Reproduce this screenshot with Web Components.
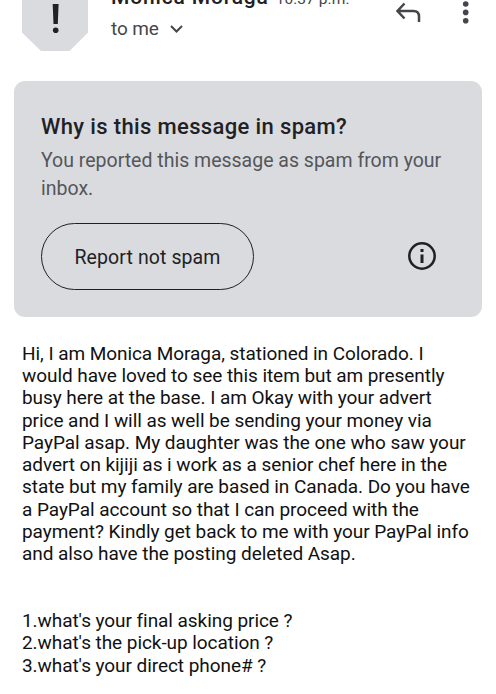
<!DOCTYPE html>
<html lang="en">
<head>
<meta charset="utf-8">
<title>Message</title>
<style>
  html, body {
    margin: 0;
    height: 694px;
    overflow: hidden;
    background: #fff;
    font-family: Roboto, sans-serif;
  }
</style>
</head>
<body>

<mail-header>
  <span slot="sender">Monica Moraga</span>
  <span slot="time">10:37 p.m.</span>
  <span slot="recipient">to me</span>
</mail-header>

<spam-notice>
  <span slot="title">Why is this message in spam?</span>
  <span slot="reason">You reported this message as spam from your<br>inbox.</span>
  <span slot="action">Report not spam</span>
</spam-notice>

<mail-body>
  <mail-line>Hi, I am Monica Moraga, stationed in Colorado. I</mail-line>
  <mail-line>would have loved to see this item but am presently</mail-line>
  <mail-line>busy here at the base. I am Okay with your advert</mail-line>
  <mail-line>price and I will as well be sending your money via</mail-line>
  <mail-line>PayPal asap. My daughter was the one who saw your</mail-line>
  <mail-line>advert on kijiji as i work as a senior chef here in the</mail-line>
  <mail-line>state but my family are based in Canada. Do you have</mail-line>
  <mail-line>a PayPal account so that I can proceed with the</mail-line>
  <mail-line>payment? Kindly get back to me with your PayPal info</mail-line>
  <mail-line>and also have the posting deleted Asap.</mail-line>
  <mail-line slot="questions">1.what's your final asking price ?</mail-line>
  <mail-line slot="questions">2.what's the pick-up location ?</mail-line>
  <mail-line slot="questions">3.what's your direct phone# ?</mail-line>
</mail-body>

<template id="mail-header-template">
  <style>
    :host {
      display: flex;
      height: 81px;
      overflow: hidden;
      color: #444649;
    }
    svg {
      display: block;
      flex: none;
    }
    .avatar {
      margin-left: 22px;
    }
    .who {
      flex: 1;
      margin: -15px 0 0 23px;
      white-space: nowrap;
    }
    .from {
      display: flex;
      align-items: baseline;
      gap: 7px;
      height: 24px;
      line-height: 24px;
    }
    .sender {
      color: #1f2124;
      font-size: 21px;
      font-weight: 500;
      letter-spacing: .85px;
    }
    .time {
      font-size: 15.500px;
      letter-spacing: .1px;
    }
    .to {
      display: flex;
      align-items: center;
      gap: 11px;
      margin-top: 8px;
      font-size: 19px;
      line-height: 24px;
      letter-spacing: -.1px;
    }
  </style>
  <svg class="avatar" width="66" height="52" viewBox="22 0 66 52">
    <path d="M22 0H88V32.500L69.500 51H41L22 32.500Z" fill="#dadbdf"/>
    <path d="M52.700 4H58.600L57.800 24H53.500Z" fill="#1f2124"/>
    <circle cx="55.700" cy="30.300" r="2.800" fill="#1f2124"/>
  </svg>
  <div class="who">
    <div class="from">
      <span class="sender"><slot name="sender"></slot></span>
      <span class="time"><slot name="time"></slot></span>
    </div>
    <div class="to">
      <slot name="recipient"></slot>
      <svg width="13" height="8" viewBox="0 0 13 8"><path d="M1 1L6.500 6.500L12 1" fill="none" stroke="#444649" stroke-width="2"/></svg>
    </div>
  </div>
  <svg width="100" height="28" viewBox="396 0 100 28">
    <path d="M404.500 3.500L397.500 11L404.500 18.500M397.500 11H413.500Q419 11 419 16.500V22" fill="none" stroke="#444649" stroke-width="2.500"/>
    <g fill="#444649">
      <circle cx="465.700" cy="4" r="2.800"/>
      <circle cx="465.700" cy="12.400" r="2.800"/>
      <circle cx="465.700" cy="20.700" r="2.800"/>
    </g>
  </svg>
</template>

<template id="spam-notice-template">
  <style>
    :host {
      display: block;
      box-sizing: border-box;
      height: 236px;
      margin: 0 14px;
      padding: 32px 27px 0;
      border-radius: 11px;
      background: #dadbdf;
      color: #1f2124;
      white-space: nowrap;
    }
    .title {
      font-size: 22px;
      font-weight: 500;
      line-height: 28px;
      letter-spacing: .36px;
    }
    .reason {
      margin-top: 6px;
      color: #54565a;
      font-size: 19.500px;
      line-height: 28px;
    }
    .actions {
      display: flex;
      align-items: center;
      justify-content: space-between;
      margin-top: 20px;
    }
    button {
      box-sizing: border-box;
      width: 213px;
      height: 67px;
      padding: 2px 0 0;
      border: 1.500px solid #1f2124;
      border-radius: 34px;
      background: none;
      color: inherit;
      font: 19.500px Roboto, sans-serif;
      letter-spacing: .1px;
    }
    svg {
      margin: 0 19px 2px 0;
    }
  </style>
  <div class="title"><slot name="title"></slot></div>
  <div class="reason"><slot name="reason"></slot></div>
  <div class="actions">
    <button><slot name="action"></slot></button>
    <svg width="28" height="28" viewBox="0 0 28 28">
      <circle cx="14" cy="14" r="12.700" fill="none" stroke="#1f2124" stroke-width="2.500"/>
      <path d="M12.500 7H15.500V10H12.500ZM12.500 12.500H15.500V21H12.500Z" fill="#1f2124"/>
    </svg>
  </div>
</template>

<template id="mail-body-template">
  <style>
    :host {
      display: block;
      padding: 26px 0 0 22px;
      color: #111;
      font-size: 19px;
      line-height: 22.220px;
      letter-spacing: -.06px;
    }
    .questions {
      margin-top: 45px;
    }
  </style>
  <slot></slot>
  <div class="questions"><slot name="questions"></slot></div>
</template>

<template id="mail-line-template">
  <style>
    :host {
      display: block;
      white-space: nowrap;
    }
  </style>
  <slot></slot>
</template>

<script>
  (function (document, window) {

    class TemplateElement extends HTMLElement {

      connectedCallback() {
        if (!this.shadowRoot) {
          const template = document.querySelector(`#${this.localName}-template`);
          const shadowRoot = this.attachShadow({ mode: 'open' });
          shadowRoot.appendChild(document.importNode(template.content, true));
        }
      }

    }

    class MailHeader extends TemplateElement {}
    class SpamNotice extends TemplateElement {}
    class MailBody extends TemplateElement {}
    class MailLine extends TemplateElement {}

    window.customElements.define('mail-header', MailHeader);
    window.customElements.define('spam-notice', SpamNotice);
    window.customElements.define('mail-body', MailBody);
    window.customElements.define('mail-line', MailLine);

  })(document, window);
</script>

</body>
</html>
